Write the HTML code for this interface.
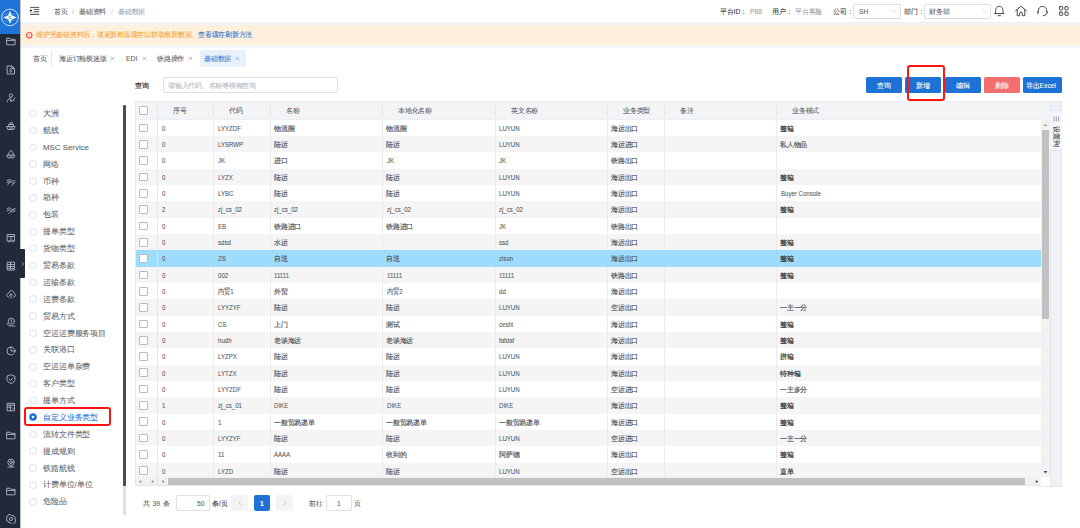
<!DOCTYPE html>
<html><head><meta charset="utf-8"><style>
*{box-sizing:border-box;margin:0;padding:0}
html,body{width:1080px;height:528px;overflow:hidden;background:#fff;font-family:"Liberation Sans",sans-serif;color:#606266;position:relative}
.t{position:absolute;white-space:nowrap;transform-origin:0 0;transform:scale(.5625);line-height:20px;-webkit-text-stroke:0.12px currentColor}
.r{position:absolute}
.b{font-weight:bold}
.si{position:absolute}
.bb{-webkit-text-stroke:0.32px currentColor}
.ns{-webkit-text-stroke:0.1px currentColor}
.tb{-webkit-text-stroke:0.3px currentColor}
.tl{-webkit-text-stroke:0.15px currentColor}
</style></head><body>
<div class="r" style="left:0.00px;top:0.00px;width:20.00px;height:528.00px;background:#222a3a"></div>
<div class="r" style="left:0.00px;top:0.00px;width:20.00px;height:34.00px;background:#1f74d8"></div>
<div class="r" style="left:20.00px;top:0.00px;width:1.20px;height:528.00px;background:rgba(34,42,58,0.28);z-index:5"></div>
<svg class="si" style="left:5.5px;top:36.40px" width="10" height="10" viewBox="0 0 10 10" fill="none" stroke="#a2a9bb" stroke-width="1" stroke-linejoin="round" stroke-linecap="round"><path d="M1 2.2h3l1 1.1h4v5.5H1z M1 4.4h8" /></svg>
<svg class="si" style="left:5.5px;top:64.50px" width="10" height="10" viewBox="0 0 10 10" fill="none" stroke="#a2a9bb" stroke-width="1" stroke-linejoin="round" stroke-linecap="round"><path d="M1.5 1h4.5l2.5 2.5v5.5h-7z M6 1v2.5h2.5" /><path d="M5.6 4.3c-.6-.5-1.8-.3-1.8.5s1.9.5 1.9 1.4-1.3 1-2 .4 M4.8 3.5v4" stroke-width="0.7"/></svg>
<svg class="si" style="left:5.5px;top:92.60px" width="10" height="10" viewBox="0 0 10 10" fill="none" stroke="#a2a9bb" stroke-width="1" stroke-linejoin="round" stroke-linecap="round"><circle cx="5" cy="2.6" r="1.7"/><path d="M1.2 8.8C1.6 6.4 3 5 5 5 M4.2 6.2L5 8.6 6 7 6.8 8.2 8.8 5" /></svg>
<svg class="si" style="left:5.5px;top:120.70px" width="10" height="10" viewBox="0 0 10 10" fill="none" stroke="#a2a9bb" stroke-width="1" stroke-linejoin="round" stroke-linecap="round"><path d="M1 5.5h8l-1.2 3H2.2z M2.5 5.5V3.5h5v2 M4 3.5V1.8h2.5v1.7" /><path d="M3.5 7h3" /></svg>
<svg class="si" style="left:5.5px;top:148.80px" width="10" height="10" viewBox="0 0 10 10" fill="none" stroke="#a2a9bb" stroke-width="1" stroke-linejoin="round" stroke-linecap="round"><path d="M1.2 6h7.6l-1 2.8H2.2z M2.5 6c0-2 1-3.5 2.5-4.5 1.5 1 2.5 2.5 2.5 4.5" /><path d="M4 7.2h2" /></svg>
<svg class="si" style="left:5.5px;top:176.90px" width="10" height="10" viewBox="0 0 10 10" fill="none" stroke="#a2a9bb" stroke-width="1" stroke-linejoin="round" stroke-linecap="round"><path d="M1 3.5c1.5-1 3-1 4.5 0s3 1 3.5 0 M1 5.5c1.5-1 3-1 4.5 0s3 1 3.5 0 M2 7.5l2-3 M6 8.5l2-2.5" /></svg>
<svg class="si" style="left:5.5px;top:205.00px" width="10" height="10" viewBox="0 0 10 10" fill="none" stroke="#a2a9bb" stroke-width="1" stroke-linejoin="round" stroke-linecap="round"><path d="M1 4c1.5-1.5 3-1.5 4.5 0s3 1 3.5-.5 M1 6c1.5-1.5 3-1.5 4.5 0s3 1 3.5-.5 M3 8.5l5-5" /></svg>
<svg class="si" style="left:5.5px;top:233.10px" width="10" height="10" viewBox="0 0 10 10" fill="none" stroke="#a2a9bb" stroke-width="1" stroke-linejoin="round" stroke-linecap="round"><path d="M1.5 1.5h7v6.5h-7z M1.5 3.5h7 M3 8v1.2 M7 8v1.2 M5 3.5v4.5" /></svg>
<svg class="si" style="left:5.5px;top:261.20px" width="10" height="10" viewBox="0 0 10 10" fill="none" stroke="#a2a9bb" stroke-width="1" stroke-linejoin="round" stroke-linecap="round"><path d="M1.5 1.2h7v7.8h-7z M1.5 3.5h7 M1.5 5.5h7 M1.5 7.3h7 M4.5 1.2v7.8" /></svg>
<svg class="si" style="left:5.5px;top:289.30px" width="10" height="10" viewBox="0 0 10 10" fill="none" stroke="#a2a9bb" stroke-width="1" stroke-linejoin="round" stroke-linecap="round"><path d="M2.8 8C1.5 8 .8 7.1.8 6.1s.8-1.9 1.9-1.9C3 2.6 4.1 1.6 5.4 1.6c1.6 0 2.8 1.3 2.8 2.9C9 4.7 9.4 5.4 9.4 6.2 9.4 7.2 8.6 8 7.6 8 M5 9V4.8 M3.6 6.2L5 4.8l1.4 1.4" /></svg>
<svg class="si" style="left:5.5px;top:317.40px" width="10" height="10" viewBox="0 0 10 10" fill="none" stroke="#a2a9bb" stroke-width="1" stroke-linejoin="round" stroke-linecap="round"><circle cx="5.3" cy="4.2" r="3.1"/><path d="M5.3 2.7v2.4 M1.5 6.5c0 1.5 1 2.5 2.5 2.5h5" /></svg>
<svg class="si" style="left:5.5px;top:345.50px" width="10" height="10" viewBox="0 0 10 10" fill="none" stroke="#a2a9bb" stroke-width="1" stroke-linejoin="round" stroke-linecap="round"><circle cx="5" cy="5" r="4"/><path d="M5 1v4h4" /></svg>
<svg class="si" style="left:5.5px;top:373.60px" width="10" height="10" viewBox="0 0 10 10" fill="none" stroke="#a2a9bb" stroke-width="1" stroke-linejoin="round" stroke-linecap="round"><path d="M5 .9l4 1.5v3c0 2-1.8 3.3-4 4-2.2-.7-4-2-4-4v-3z M3.2 5.1l1.4 1.3 2.4-2.4" /></svg>
<svg class="si" style="left:5.5px;top:401.70px" width="10" height="10" viewBox="0 0 10 10" fill="none" stroke="#a2a9bb" stroke-width="1" stroke-linejoin="round" stroke-linecap="round"><path d="M1.5 1.3h7v7.5h-7z M1.5 3.2h7 M1.5 5.2h3 M6 5.5l1.5 1.5 M4.5 3.2v5.6" /></svg>
<svg class="si" style="left:5.5px;top:429.80px" width="10" height="10" viewBox="0 0 10 10" fill="none" stroke="#a2a9bb" stroke-width="1" stroke-linejoin="round" stroke-linecap="round"><path d="M1 2.2h3l1 1.1h4v5.5H1z M1 4.4h8" /></svg>
<svg class="si" style="left:5.5px;top:457.90px" width="10" height="10" viewBox="0 0 10 10" fill="none" stroke="#a2a9bb" stroke-width="1" stroke-linejoin="round" stroke-linecap="round"><circle cx="5" cy="4.3" r="3.2"/><circle cx="5" cy="4.3" r="1.3"/><path d="M2 9h6 M5 7.5V9" /></svg>
<svg class="si" style="left:5.5px;top:486.00px" width="10" height="10" viewBox="0 0 10 10" fill="none" stroke="#a2a9bb" stroke-width="1" stroke-linejoin="round" stroke-linecap="round"><path d="M1 2.2h3l1 1.1h4v5.5H1z M1 4.4h8" /></svg>
<svg class="si" style="left:5.5px;top:514.10px" width="10" height="10" viewBox="0 0 10 10" fill="none" stroke="#a2a9bb" stroke-width="1" stroke-linejoin="round" stroke-linecap="round"><path d="M5 .8l1.1.9 1.4-.2.5 1.3 1.3.6-.2 1.4.8 1.2-.8 1.2.2 1.4-1.3.6-.5 1.3-1.4-.2L5 9.2l-1.1-.9-1.4.2-.5-1.3-1.3-.6.2-1.4L.1 5l.8-1.2-.2-1.4 1.3-.6.5-1.3 1.4.2z"/><circle cx="5" cy="5" r="1.6"/></svg>
<div class="r" style="left:20.00px;top:0.00px;width:1060.00px;height:22.50px;background:#fff;border-bottom:1px solid #eceef3"></div>
<div class="r" style="left:20.00px;top:22.50px;width:1060.00px;height:25.00px;background:#f3f4f7"></div>
<div class="r" style="left:20.00px;top:25.20px;width:1060.00px;height:19.80px;background:#fef0dc"></div>
<div class="t " style="left:53.50px;top:5.88px;font-size:12px;color:#606266;">首页</div>
<div class="t " style="left:72.00px;top:5.88px;font-size:12px;color:#c0c4cc;">/</div>
<div class="t " style="left:79.00px;top:5.88px;font-size:12px;color:#606266;">基础资料</div>
<div class="t " style="left:111.00px;top:5.88px;font-size:12px;color:#c0c4cc;">/</div>
<div class="t " style="left:118.00px;top:5.88px;font-size:12px;color:#97a8be;">基础数据</div>
<div class="t " style="left:720.40px;top:5.88px;font-size:12px;color:#303133;">平台ID：</div>
<div class="t " style="left:749.60px;top:5.88px;font-size:12px;color:#97a0aa;">P88</div>
<div class="t " style="left:772.00px;top:5.88px;font-size:12px;color:#303133;">用户：</div>
<div class="t " style="left:795.00px;top:5.88px;font-size:12px;color:#97a0aa;">平台客服</div>
<div class="t " style="left:833.00px;top:5.88px;font-size:12px;color:#303133;">公司：</div>
<div class="r" style="left:853.00px;top:3.50px;width:47.50px;height:15.00px;border:1px solid #dcdfe6;border-radius:2px;background:#fff"></div>
<div class="t " style="left:858.50px;top:5.88px;font-size:12px;color:#606266;">SH</div>
<div class="t " style="left:903.70px;top:5.88px;font-size:12px;color:#303133;">部门：</div>
<div class="r" style="left:924.40px;top:3.50px;width:67.00px;height:15.00px;border:1px solid #dcdfe6;border-radius:2px;background:#fff"></div>
<div class="t " style="left:929.00px;top:5.88px;font-size:12px;color:#606266;">财务部</div>
<div class="t " style="left:35.50px;top:29.48px;font-size:12px;color:#f5a33b;">维护完基础资料后，请更新相应缓存以获取最新数据。</div>
<div class="t " style="left:197.50px;top:29.48px;font-size:12px;color:#2f6fd0;">查看缓存刷新方法</div>
<div class="t " style="left:33.20px;top:52.68px;font-size:12px;color:#606266;">首页</div>
<div class="r" style="left:51.30px;top:50.30px;width:0.70px;height:16.70px;background:#e4e7ed"></div>
<div class="t " style="left:59.00px;top:52.68px;font-size:12px;color:#606266;">海运订舱极速版</div>
<svg class="si" style="left:110.10px;top:56.10px" width="5" height="5" viewBox="0 0 5 5"><path d="M0.8 0.8L4.2 4.2M4.2 0.8L0.8 4.2" stroke="#8f9297" stroke-width="0.65"/></svg><div class="t " style="left:126.00px;top:52.68px;font-size:12px;color:#606266;">EDI</div>
<svg class="si" style="left:141.60px;top:56.10px" width="5" height="5" viewBox="0 0 5 5"><path d="M0.8 0.8L4.2 4.2M4.2 0.8L0.8 4.2" stroke="#8f9297" stroke-width="0.65"/></svg><div class="t " style="left:156.80px;top:52.68px;font-size:12px;color:#606266;">铁路操作</div>
<svg class="si" style="left:187.80px;top:56.10px" width="5" height="5" viewBox="0 0 5 5"><path d="M0.8 0.8L4.2 4.2M4.2 0.8L0.8 4.2" stroke="#8f9297" stroke-width="0.65"/></svg><div class="r" style="left:199.80px;top:50.30px;width:46.60px;height:17.00px;background:#e8f0fb"></div>
<div class="t " style="left:204.00px;top:52.68px;font-size:12px;color:#3f7fd6;">基础数据</div>
<svg class="si" style="left:234.70px;top:56.10px" width="5" height="5" viewBox="0 0 5 5"><path d="M0.8 0.8L4.2 4.2M4.2 0.8L0.8 4.2" stroke="#7a9fd6" stroke-width="0.65"/></svg><div class="t bb" style="left:135.10px;top:79.88px;font-size:12px;color:#303133;">查询</div>
<div class="r" style="left:163.20px;top:77.10px;width:174.50px;height:15.70px;border:1px solid #dcdfe6;border-radius:2px"></div>
<div class="t " style="left:167.70px;top:79.67px;font-size:12px;color:#b4b7bd;">请输入代码、名称等模糊查询</div>
<div class="r" style="left:865.80px;top:77.10px;width:36.00px;height:15.70px;background:#1f72d5;border-radius:1.5px"></div>
<div class="t " style="left:877.05px;top:80.07px;font-size:12px;color:#fff;">查询</div>
<div class="r" style="left:905.00px;top:77.10px;width:36.30px;height:15.70px;background:#1f72d5;border-radius:1.5px"></div>
<div class="t " style="left:916.40px;top:80.07px;font-size:12px;color:#fff;">新增</div>
<div class="r" style="left:944.60px;top:77.10px;width:36.00px;height:15.70px;background:#1f72d5;border-radius:1.5px"></div>
<div class="t " style="left:955.85px;top:80.07px;font-size:12px;color:#fff;">编辑</div>
<div class="r" style="left:984.10px;top:77.10px;width:36.00px;height:15.70px;background:#f36e6e;border-radius:1.5px"></div>
<div class="t " style="left:995.35px;top:80.07px;font-size:12px;color:#fff;">删除</div>
<div class="r" style="left:1023.40px;top:77.10px;width:38.60px;height:15.70px;background:#1f72d5;border-radius:1.5px"></div>
<div class="t " style="left:1026.20px;top:80.07px;font-size:12px;color:#fff;">导出Excel</div>
<div class="r" style="left:906.80px;top:64.70px;width:37.80px;height:36.00px;border:2.1px solid #ff1414;border-radius:3px"></div>
<div class="r" style="left:29.40px;top:109.80px;width:7.60px;height:7.60px;border:0.8px solid #dcdfe6;border-radius:50%;background:#fff"></div>
<div class="t ns" style="left:42.70px;top:108.07px;font-size:14px;color:#606266;">大洲</div>
<div class="r" style="left:29.40px;top:126.68px;width:7.60px;height:7.60px;border:0.8px solid #dcdfe6;border-radius:50%;background:#fff"></div>
<div class="t ns" style="left:42.70px;top:124.95px;font-size:14px;color:#606266;">航线</div>
<div class="r" style="left:29.40px;top:143.56px;width:7.60px;height:7.60px;border:0.8px solid #dcdfe6;border-radius:50%;background:#fff"></div>
<div class="t ns" style="left:42.70px;top:141.83px;font-size:14px;color:#606266;">MSC Service</div>
<div class="r" style="left:29.40px;top:160.44px;width:7.60px;height:7.60px;border:0.8px solid #dcdfe6;border-radius:50%;background:#fff"></div>
<div class="t ns" style="left:42.70px;top:158.72px;font-size:14px;color:#606266;">网络</div>
<div class="r" style="left:29.40px;top:177.32px;width:7.60px;height:7.60px;border:0.8px solid #dcdfe6;border-radius:50%;background:#fff"></div>
<div class="t ns" style="left:42.70px;top:175.59px;font-size:14px;color:#606266;">币种</div>
<div class="r" style="left:29.40px;top:194.20px;width:7.60px;height:7.60px;border:0.8px solid #dcdfe6;border-radius:50%;background:#fff"></div>
<div class="t ns" style="left:42.70px;top:192.47px;font-size:14px;color:#606266;">箱种</div>
<div class="r" style="left:29.40px;top:211.08px;width:7.60px;height:7.60px;border:0.8px solid #dcdfe6;border-radius:50%;background:#fff"></div>
<div class="t ns" style="left:42.70px;top:209.35px;font-size:14px;color:#606266;">包装</div>
<div class="r" style="left:29.40px;top:227.96px;width:7.60px;height:7.60px;border:0.8px solid #dcdfe6;border-radius:50%;background:#fff"></div>
<div class="t ns" style="left:42.70px;top:226.23px;font-size:14px;color:#606266;">提单类型</div>
<div class="r" style="left:29.40px;top:244.84px;width:7.60px;height:7.60px;border:0.8px solid #dcdfe6;border-radius:50%;background:#fff"></div>
<div class="t ns" style="left:42.70px;top:243.11px;font-size:14px;color:#606266;">货物类型</div>
<div class="r" style="left:29.40px;top:261.72px;width:7.60px;height:7.60px;border:0.8px solid #dcdfe6;border-radius:50%;background:#fff"></div>
<div class="t ns" style="left:42.70px;top:260.00px;font-size:14px;color:#606266;">贸易条款</div>
<div class="r" style="left:29.40px;top:278.60px;width:7.60px;height:7.60px;border:0.8px solid #dcdfe6;border-radius:50%;background:#fff"></div>
<div class="t ns" style="left:42.70px;top:276.88px;font-size:14px;color:#606266;">运输条款</div>
<div class="r" style="left:29.40px;top:295.48px;width:7.60px;height:7.60px;border:0.8px solid #dcdfe6;border-radius:50%;background:#fff"></div>
<div class="t ns" style="left:42.70px;top:293.75px;font-size:14px;color:#606266;">运费条款</div>
<div class="r" style="left:29.40px;top:312.36px;width:7.60px;height:7.60px;border:0.8px solid #dcdfe6;border-radius:50%;background:#fff"></div>
<div class="t ns" style="left:42.70px;top:310.63px;font-size:14px;color:#606266;">贸易方式</div>
<div class="r" style="left:29.40px;top:329.24px;width:7.60px;height:7.60px;border:0.8px solid #dcdfe6;border-radius:50%;background:#fff"></div>
<div class="t ns" style="left:42.70px;top:327.51px;font-size:14px;color:#606266;">空运运费服务项目</div>
<div class="r" style="left:29.40px;top:346.12px;width:7.60px;height:7.60px;border:0.8px solid #dcdfe6;border-radius:50%;background:#fff"></div>
<div class="t ns" style="left:42.70px;top:344.39px;font-size:14px;color:#606266;">关联港口</div>
<div class="r" style="left:29.40px;top:363.00px;width:7.60px;height:7.60px;border:0.8px solid #dcdfe6;border-radius:50%;background:#fff"></div>
<div class="t ns" style="left:42.70px;top:361.27px;font-size:14px;color:#606266;">空运运单杂费</div>
<div class="r" style="left:29.40px;top:379.88px;width:7.60px;height:7.60px;border:0.8px solid #dcdfe6;border-radius:50%;background:#fff"></div>
<div class="t ns" style="left:42.70px;top:378.15px;font-size:14px;color:#606266;">客户类型</div>
<div class="r" style="left:29.40px;top:396.76px;width:7.60px;height:7.60px;border:0.8px solid #dcdfe6;border-radius:50%;background:#fff"></div>
<div class="t ns" style="left:42.70px;top:395.03px;font-size:14px;color:#606266;">提单方式</div>
<svg class="si" style="left:29.2px;top:413.44px" width="8" height="8" viewBox="0 0 8 8"><circle cx="4" cy="4" r="3.8" fill="#1e6fd9"/><circle cx="4" cy="4" r="1.25" fill="#fff"/></svg><div class="t ns" style="left:42.70px;top:411.91px;font-size:14px;color:#1e6fd9;">自定义业务类型</div>
<div class="r" style="left:29.40px;top:430.52px;width:7.60px;height:7.60px;border:0.8px solid #dcdfe6;border-radius:50%;background:#fff"></div>
<div class="t ns" style="left:42.70px;top:428.79px;font-size:14px;color:#606266;">流转文件类型</div>
<div class="r" style="left:29.40px;top:447.40px;width:7.60px;height:7.60px;border:0.8px solid #dcdfe6;border-radius:50%;background:#fff"></div>
<div class="t ns" style="left:42.70px;top:445.67px;font-size:14px;color:#606266;">提成规则</div>
<div class="r" style="left:29.40px;top:464.28px;width:7.60px;height:7.60px;border:0.8px solid #dcdfe6;border-radius:50%;background:#fff"></div>
<div class="t ns" style="left:42.70px;top:462.55px;font-size:14px;color:#606266;">铁路航线</div>
<div class="r" style="left:29.40px;top:481.16px;width:7.60px;height:7.60px;border:0.8px solid #dcdfe6;border-radius:50%;background:#fff"></div>
<div class="t ns" style="left:42.70px;top:479.43px;font-size:14px;color:#606266;">计费单位/单位</div>
<div class="r" style="left:29.40px;top:498.04px;width:7.60px;height:7.60px;border:0.8px solid #dcdfe6;border-radius:50%;background:#fff"></div>
<div class="t ns" style="left:42.70px;top:496.31px;font-size:14px;color:#606266;">危险品</div>
<div class="r" style="left:24.00px;top:407.10px;width:86.80px;height:19.40px;border:2.1px solid #ff1414;border-radius:3px"></div>
<div class="r" style="left:122.80px;top:105.30px;width:3.00px;height:381.00px;background:#4a4d52;border-radius:1.5px"></div>
<div class="r" style="left:122.80px;top:486.00px;width:3.00px;height:29.00px;background:#dfe1e8"></div>
<div class="r" style="left:135.50px;top:100.80px;width:915.00px;height:19.00px;background:#f2f4f5;border-top:1px solid #ebeef5;border-bottom:1px solid #ebeef5"></div>
<div class="r" style="left:135.50px;top:119.80px;width:905.50px;height:16.32px;background:#fff"></div>
<div class="r" style="left:135.50px;top:136.12px;width:905.50px;height:16.32px;background:#f5f5f5"></div>
<div class="r" style="left:135.50px;top:152.44px;width:905.50px;height:16.32px;background:#fff"></div>
<div class="r" style="left:135.50px;top:168.76px;width:905.50px;height:16.32px;background:#f5f5f5"></div>
<div class="r" style="left:135.50px;top:185.08px;width:905.50px;height:16.32px;background:#fff"></div>
<div class="r" style="left:135.50px;top:201.40px;width:905.50px;height:16.32px;background:#f5f5f5"></div>
<div class="r" style="left:135.50px;top:217.72px;width:905.50px;height:16.32px;background:#fff"></div>
<div class="r" style="left:135.50px;top:234.04px;width:905.50px;height:16.32px;background:#f5f5f5"></div>
<div class="r" style="left:135.50px;top:250.36px;width:905.50px;height:16.32px;background:#9ddcfc"></div>
<div class="r" style="left:135.50px;top:266.68px;width:905.50px;height:16.32px;background:#f5f5f5"></div>
<div class="r" style="left:135.50px;top:283.00px;width:905.50px;height:16.32px;background:#fff"></div>
<div class="r" style="left:135.50px;top:299.32px;width:905.50px;height:16.32px;background:#f5f5f5"></div>
<div class="r" style="left:135.50px;top:315.64px;width:905.50px;height:16.32px;background:#fff"></div>
<div class="r" style="left:135.50px;top:331.96px;width:905.50px;height:16.32px;background:#f5f5f5"></div>
<div class="r" style="left:135.50px;top:348.28px;width:905.50px;height:16.32px;background:#fff"></div>
<div class="r" style="left:135.50px;top:364.60px;width:905.50px;height:16.32px;background:#f5f5f5"></div>
<div class="r" style="left:135.50px;top:380.92px;width:905.50px;height:16.32px;background:#fff"></div>
<div class="r" style="left:135.50px;top:397.24px;width:905.50px;height:16.32px;background:#f5f5f5"></div>
<div class="r" style="left:135.50px;top:413.56px;width:905.50px;height:16.32px;background:#fff"></div>
<div class="r" style="left:135.50px;top:429.88px;width:905.50px;height:16.32px;background:#f5f5f5"></div>
<div class="r" style="left:135.50px;top:446.20px;width:905.50px;height:16.32px;background:#fff"></div>
<div class="r" style="left:135.50px;top:462.52px;width:905.50px;height:16.32px;background:#f5f5f5"></div>
<div class="r" style="left:213.10px;top:119.80px;width:0.80px;height:359.04px;background:#e9ebef"></div>
<div class="r" style="left:269.60px;top:119.80px;width:0.80px;height:359.04px;background:#e9ebef"></div>
<div class="r" style="left:382.10px;top:119.80px;width:0.80px;height:359.04px;background:#e9ebef"></div>
<div class="r" style="left:494.60px;top:119.80px;width:0.80px;height:359.04px;background:#e9ebef"></div>
<div class="r" style="left:607.00px;top:119.80px;width:0.80px;height:359.04px;background:#e9ebef"></div>
<div class="r" style="left:664.10px;top:119.80px;width:0.80px;height:359.04px;background:#e9ebef"></div>
<div class="r" style="left:776.30px;top:119.80px;width:0.80px;height:359.04px;background:#e9ebef"></div>
<div class="r" style="left:135.50px;top:250.36px;width:905.50px;height:16.32px;background:#9ddcfc"></div>
<div class="r" style="left:213.10px;top:104.80px;width:0.80px;height:11.00px;background:#e2e5ea"></div>
<div class="r" style="left:269.60px;top:104.80px;width:0.80px;height:11.00px;background:#e2e5ea"></div>
<div class="r" style="left:382.10px;top:104.80px;width:0.80px;height:11.00px;background:#e2e5ea"></div>
<div class="r" style="left:494.60px;top:104.80px;width:0.80px;height:11.00px;background:#e2e5ea"></div>
<div class="r" style="left:607.00px;top:104.80px;width:0.80px;height:11.00px;background:#e2e5ea"></div>
<div class="r" style="left:664.10px;top:104.80px;width:0.80px;height:11.00px;background:#e2e5ea"></div>
<div class="r" style="left:776.30px;top:104.80px;width:0.80px;height:11.00px;background:#e2e5ea"></div>
<div class="r" style="left:139.20px;top:106.00px;width:8.70px;height:8.70px;border:0.8px solid #b6bcc6;border-radius:1px;background:#fff"></div>
<div class="t " style="left:172.50px;top:104.77px;font-size:12px;color:#606266;">序号</div>
<div class="t " style="left:229.00px;top:104.77px;font-size:12px;color:#606266;">代码</div>
<div class="t " style="left:285.50px;top:104.77px;font-size:12px;color:#606266;">名称</div>
<div class="t " style="left:398.00px;top:104.77px;font-size:12px;color:#606266;">本地化名称</div>
<div class="t " style="left:510.50px;top:104.77px;font-size:12px;color:#606266;">英文名称</div>
<div class="t " style="left:622.90px;top:104.77px;font-size:12px;color:#606266;">业务类型</div>
<div class="t " style="left:680.00px;top:104.77px;font-size:12px;color:#606266;">备注</div>
<div class="t " style="left:792.20px;top:104.77px;font-size:12px;color:#606266;">业务模式</div>
<div class="r" style="left:139.20px;top:123.66px;width:8.70px;height:8.70px;border:0.8px solid #b6bcc6;border-radius:1px;background:#fff"></div>
<div class="t tl" style="left:161.50px;top:122.83px;font-size:12px;color:#55575c;transform:scale(.434,.5625);font-size:14px;">0</div>
<div class="t tl" style="left:217.70px;top:122.83px;font-size:12px;color:#55575c;transform:scale(.434,.5625);font-size:14px;">LYYZDF</div>
<div class="t tb" style="left:273.50px;top:122.83px;font-size:12px;color:#55575c;">物流圈</div>
<div class="t tb" style="left:386.00px;top:122.83px;font-size:12px;color:#55575c;">物流圈</div>
<div class="t tl" style="left:499.20px;top:122.83px;font-size:12px;color:#55575c;transform:scale(.434,.5625);font-size:14px;">LUYUN</div>
<div class="t tb" style="left:610.90px;top:122.83px;font-size:12px;color:#55575c;">海运出口</div>
<div class="t bb" style="left:780.20px;top:122.83px;font-size:12px;color:#303133;">整箱</div>
<div class="r" style="left:139.20px;top:139.98px;width:8.70px;height:8.70px;border:0.8px solid #b6bcc6;border-radius:1px;background:#fff"></div>
<div class="t tl" style="left:161.50px;top:139.16px;font-size:12px;color:#55575c;transform:scale(.434,.5625);font-size:14px;">0</div>
<div class="t tl" style="left:217.70px;top:139.16px;font-size:12px;color:#55575c;transform:scale(.434,.5625);font-size:14px;">LYSRWP</div>
<div class="t tb" style="left:273.50px;top:139.16px;font-size:12px;color:#55575c;">陆运</div>
<div class="t tb" style="left:386.00px;top:139.16px;font-size:12px;color:#55575c;">陆运</div>
<div class="t tl" style="left:499.20px;top:139.16px;font-size:12px;color:#55575c;transform:scale(.434,.5625);font-size:14px;">LUYUN</div>
<div class="t tb" style="left:610.90px;top:139.16px;font-size:12px;color:#55575c;">海运进口</div>
<div class="t tb" style="left:780.20px;top:139.16px;font-size:12px;color:#55575c;">私人物品</div>
<div class="r" style="left:139.20px;top:156.30px;width:8.70px;height:8.70px;border:0.8px solid #b6bcc6;border-radius:1px;background:#fff"></div>
<div class="t tl" style="left:161.50px;top:155.47px;font-size:12px;color:#55575c;transform:scale(.434,.5625);font-size:14px;">0</div>
<div class="t tl" style="left:217.70px;top:155.47px;font-size:12px;color:#55575c;transform:scale(.434,.5625);font-size:14px;">JK</div>
<div class="t tb" style="left:273.50px;top:155.47px;font-size:12px;color:#55575c;">进口</div>
<div class="t tl" style="left:386.70px;top:155.47px;font-size:12px;color:#55575c;transform:scale(.434,.5625);font-size:14px;">JK</div>
<div class="t tl" style="left:499.20px;top:155.47px;font-size:12px;color:#55575c;transform:scale(.434,.5625);font-size:14px;">JK</div>
<div class="t tb" style="left:610.90px;top:155.47px;font-size:12px;color:#55575c;">铁路出口</div>
<div class="r" style="left:139.20px;top:172.62px;width:8.70px;height:8.70px;border:0.8px solid #b6bcc6;border-radius:1px;background:#fff"></div>
<div class="t tl" style="left:161.50px;top:171.79px;font-size:12px;color:#55575c;transform:scale(.434,.5625);font-size:14px;">0</div>
<div class="t tl" style="left:217.70px;top:171.79px;font-size:12px;color:#55575c;transform:scale(.434,.5625);font-size:14px;">LYZX</div>
<div class="t tb" style="left:273.50px;top:171.79px;font-size:12px;color:#55575c;">陆运</div>
<div class="t tb" style="left:386.00px;top:171.79px;font-size:12px;color:#55575c;">陆运</div>
<div class="t tl" style="left:499.20px;top:171.79px;font-size:12px;color:#55575c;transform:scale(.434,.5625);font-size:14px;">LUYUN</div>
<div class="t tb" style="left:610.90px;top:171.79px;font-size:12px;color:#55575c;">海运出口</div>
<div class="t bb" style="left:780.20px;top:171.79px;font-size:12px;color:#303133;">整箱</div>
<div class="r" style="left:139.20px;top:188.94px;width:8.70px;height:8.70px;border:0.8px solid #b6bcc6;border-radius:1px;background:#fff"></div>
<div class="t tl" style="left:161.50px;top:188.11px;font-size:12px;color:#55575c;transform:scale(.434,.5625);font-size:14px;">0</div>
<div class="t tl" style="left:217.70px;top:188.11px;font-size:12px;color:#55575c;transform:scale(.434,.5625);font-size:14px;">LYBC</div>
<div class="t tb" style="left:273.50px;top:188.11px;font-size:12px;color:#55575c;">陆运</div>
<div class="t tb" style="left:386.00px;top:188.11px;font-size:12px;color:#55575c;">陆运</div>
<div class="t tl" style="left:499.20px;top:188.11px;font-size:12px;color:#55575c;transform:scale(.434,.5625);font-size:14px;">LUYUN</div>
<div class="t tb" style="left:610.90px;top:188.11px;font-size:12px;color:#55575c;">海运出口</div>
<div class="t tl" style="left:780.90px;top:188.11px;font-size:12px;color:#55575c;transform:scale(.434,.5625);font-size:14px;">Buyer Console</div>
<div class="r" style="left:139.20px;top:205.26px;width:8.70px;height:8.70px;border:0.8px solid #b6bcc6;border-radius:1px;background:#fff"></div>
<div class="t tl" style="left:161.50px;top:204.43px;font-size:12px;color:#55575c;transform:scale(.434,.5625);font-size:14px;">2</div>
<div class="t tl" style="left:217.70px;top:204.43px;font-size:12px;color:#55575c;transform:scale(.434,.5625);font-size:14px;">zj_cs_02</div>
<div class="t tl" style="left:274.20px;top:204.43px;font-size:12px;color:#55575c;transform:scale(.434,.5625);font-size:14px;">zj_cs_02</div>
<div class="t tl" style="left:386.70px;top:204.43px;font-size:12px;color:#55575c;transform:scale(.434,.5625);font-size:14px;">zj_cs_02</div>
<div class="t tl" style="left:499.20px;top:204.43px;font-size:12px;color:#55575c;transform:scale(.434,.5625);font-size:14px;">zj_cs_02</div>
<div class="t tb" style="left:610.90px;top:204.43px;font-size:12px;color:#55575c;">海运出口</div>
<div class="t bb" style="left:780.20px;top:204.43px;font-size:12px;color:#303133;">整箱</div>
<div class="r" style="left:139.20px;top:221.58px;width:8.70px;height:8.70px;border:0.8px solid #b6bcc6;border-radius:1px;background:#fff"></div>
<div class="t tl" style="left:161.50px;top:220.75px;font-size:12px;color:#55575c;transform:scale(.434,.5625);font-size:14px;">0</div>
<div class="t tl" style="left:217.70px;top:220.75px;font-size:12px;color:#55575c;transform:scale(.434,.5625);font-size:14px;">EB</div>
<div class="t tb" style="left:273.50px;top:220.75px;font-size:12px;color:#55575c;">铁路进口</div>
<div class="t tb" style="left:386.00px;top:220.75px;font-size:12px;color:#55575c;">铁路进口</div>
<div class="t tl" style="left:499.20px;top:220.75px;font-size:12px;color:#55575c;transform:scale(.434,.5625);font-size:14px;">JK</div>
<div class="t tb" style="left:610.90px;top:220.75px;font-size:12px;color:#55575c;">铁路出口</div>
<div class="r" style="left:139.20px;top:237.90px;width:8.70px;height:8.70px;border:0.8px solid #b6bcc6;border-radius:1px;background:#fff"></div>
<div class="t tl" style="left:161.50px;top:237.08px;font-size:12px;color:#55575c;transform:scale(.434,.5625);font-size:14px;">0</div>
<div class="t tl" style="left:217.70px;top:237.08px;font-size:12px;color:#55575c;transform:scale(.434,.5625);font-size:14px;">sdsd</div>
<div class="t tb" style="left:273.50px;top:237.08px;font-size:12px;color:#55575c;">水运</div>
<div class="t tl" style="left:499.20px;top:237.08px;font-size:12px;color:#55575c;transform:scale(.434,.5625);font-size:14px;">ssd</div>
<div class="t tb" style="left:610.90px;top:237.08px;font-size:12px;color:#55575c;">海运出口</div>
<div class="t bb" style="left:780.20px;top:237.08px;font-size:12px;color:#303133;">整箱</div>
<div class="r" style="left:139.20px;top:254.22px;width:8.70px;height:8.70px;border:0.8px solid #b6bcc6;border-radius:1px;background:#fff"></div>
<div class="t tl" style="left:161.50px;top:253.40px;font-size:12px;color:#55575c;transform:scale(.434,.5625);font-size:14px;">0</div>
<div class="t tl" style="left:217.70px;top:253.40px;font-size:12px;color:#55575c;transform:scale(.434,.5625);font-size:14px;">ZS</div>
<div class="t tb" style="left:273.50px;top:253.40px;font-size:12px;color:#55575c;">自送</div>
<div class="t tb" style="left:386.00px;top:253.40px;font-size:12px;color:#55575c;">自送</div>
<div class="t tl" style="left:499.20px;top:253.40px;font-size:12px;color:#55575c;transform:scale(.434,.5625);font-size:14px;">zison</div>
<div class="t tb" style="left:610.90px;top:253.40px;font-size:12px;color:#55575c;">海运出口</div>
<div class="t bb" style="left:780.20px;top:253.40px;font-size:12px;color:#303133;">整箱</div>
<div class="r" style="left:139.20px;top:270.54px;width:8.70px;height:8.70px;border:0.8px solid #b6bcc6;border-radius:1px;background:#fff"></div>
<div class="t tl" style="left:161.50px;top:269.72px;font-size:12px;color:#55575c;transform:scale(.434,.5625);font-size:14px;">0</div>
<div class="t tl" style="left:217.70px;top:269.72px;font-size:12px;color:#55575c;transform:scale(.434,.5625);font-size:14px;">002</div>
<div class="t tl" style="left:274.20px;top:269.72px;font-size:12px;color:#55575c;transform:scale(.434,.5625);font-size:14px;">11111</div>
<div class="t tl" style="left:386.70px;top:269.72px;font-size:12px;color:#55575c;transform:scale(.434,.5625);font-size:14px;">11111</div>
<div class="t tl" style="left:499.20px;top:269.72px;font-size:12px;color:#55575c;transform:scale(.434,.5625);font-size:14px;">11111</div>
<div class="t tb" style="left:610.90px;top:269.72px;font-size:12px;color:#55575c;">铁路出口</div>
<div class="t bb" style="left:780.20px;top:269.72px;font-size:12px;color:#303133;">整箱</div>
<div class="r" style="left:139.20px;top:286.86px;width:8.70px;height:8.70px;border:0.8px solid #b6bcc6;border-radius:1px;background:#fff"></div>
<div class="t tl" style="left:161.50px;top:286.04px;font-size:12px;color:#55575c;transform:scale(.434,.5625);font-size:14px;">0</div>
<div class="t tl" style="left:217.70px;top:286.04px;font-size:12px;color:#55575c;transform:scale(.434,.5625);font-size:14px;">内贸1</div>
<div class="t tb" style="left:273.50px;top:286.04px;font-size:12px;color:#55575c;">外贸</div>
<div class="t tl" style="left:386.70px;top:286.04px;font-size:12px;color:#55575c;transform:scale(.434,.5625);font-size:14px;">内贸2</div>
<div class="t tl" style="left:499.20px;top:286.04px;font-size:12px;color:#55575c;transform:scale(.434,.5625);font-size:14px;">dd</div>
<div class="t tb" style="left:610.90px;top:286.04px;font-size:12px;color:#55575c;">海运出口</div>
<div class="r" style="left:139.20px;top:303.18px;width:8.70px;height:8.70px;border:0.8px solid #b6bcc6;border-radius:1px;background:#fff"></div>
<div class="t tl" style="left:161.50px;top:302.36px;font-size:12px;color:#55575c;transform:scale(.434,.5625);font-size:14px;">0</div>
<div class="t tl" style="left:217.70px;top:302.36px;font-size:12px;color:#55575c;transform:scale(.434,.5625);font-size:14px;">LYYZYF</div>
<div class="t tb" style="left:273.50px;top:302.36px;font-size:12px;color:#55575c;">陆运</div>
<div class="t tb" style="left:386.00px;top:302.36px;font-size:12px;color:#55575c;">陆运</div>
<div class="t tl" style="left:499.20px;top:302.36px;font-size:12px;color:#55575c;transform:scale(.434,.5625);font-size:14px;">LUYUN</div>
<div class="t tb" style="left:610.90px;top:302.36px;font-size:12px;color:#55575c;">空运出口</div>
<div class="t tb" style="left:780.20px;top:302.36px;font-size:12px;color:#55575c;">一主一分</div>
<div class="r" style="left:139.20px;top:319.50px;width:8.70px;height:8.70px;border:0.8px solid #b6bcc6;border-radius:1px;background:#fff"></div>
<div class="t tl" style="left:161.50px;top:318.68px;font-size:12px;color:#55575c;transform:scale(.434,.5625);font-size:14px;">0</div>
<div class="t tl" style="left:217.70px;top:318.68px;font-size:12px;color:#55575c;transform:scale(.434,.5625);font-size:14px;">CS</div>
<div class="t tb" style="left:273.50px;top:318.68px;font-size:12px;color:#55575c;">上门</div>
<div class="t tb" style="left:386.00px;top:318.68px;font-size:12px;color:#55575c;">测试</div>
<div class="t tl" style="left:499.20px;top:318.68px;font-size:12px;color:#55575c;transform:scale(.434,.5625);font-size:14px;">ceshi</div>
<div class="t tb" style="left:610.90px;top:318.68px;font-size:12px;color:#55575c;">海运出口</div>
<div class="t bb" style="left:780.20px;top:318.68px;font-size:12px;color:#303133;">整箱</div>
<div class="r" style="left:139.20px;top:335.82px;width:8.70px;height:8.70px;border:0.8px solid #b6bcc6;border-radius:1px;background:#fff"></div>
<div class="t tl" style="left:161.50px;top:335.00px;font-size:12px;color:#55575c;transform:scale(.434,.5625);font-size:14px;">0</div>
<div class="t tl" style="left:217.70px;top:335.00px;font-size:12px;color:#55575c;transform:scale(.434,.5625);font-size:14px;">hudh</div>
<div class="t tb" style="left:273.50px;top:335.00px;font-size:12px;color:#55575c;">老谈海运</div>
<div class="t tb" style="left:386.00px;top:335.00px;font-size:12px;color:#55575c;">老谈海运</div>
<div class="t tl" style="left:499.20px;top:335.00px;font-size:12px;color:#55575c;transform:scale(.434,.5625);font-size:14px;">fafdaf</div>
<div class="t tb" style="left:610.90px;top:335.00px;font-size:12px;color:#55575c;">海运出口</div>
<div class="t bb" style="left:780.20px;top:335.00px;font-size:12px;color:#303133;">整箱</div>
<div class="r" style="left:139.20px;top:352.14px;width:8.70px;height:8.70px;border:0.8px solid #b6bcc6;border-radius:1px;background:#fff"></div>
<div class="t tl" style="left:161.50px;top:351.32px;font-size:12px;color:#55575c;transform:scale(.434,.5625);font-size:14px;">0</div>
<div class="t tl" style="left:217.70px;top:351.32px;font-size:12px;color:#55575c;transform:scale(.434,.5625);font-size:14px;">LYZPX</div>
<div class="t tb" style="left:273.50px;top:351.32px;font-size:12px;color:#55575c;">陆运</div>
<div class="t tb" style="left:386.00px;top:351.32px;font-size:12px;color:#55575c;">陆运</div>
<div class="t tl" style="left:499.20px;top:351.32px;font-size:12px;color:#55575c;transform:scale(.434,.5625);font-size:14px;">LUYUN</div>
<div class="t tb" style="left:610.90px;top:351.32px;font-size:12px;color:#55575c;">海运出口</div>
<div class="t bb" style="left:780.20px;top:351.32px;font-size:12px;color:#303133;">拼箱</div>
<div class="r" style="left:139.20px;top:368.46px;width:8.70px;height:8.70px;border:0.8px solid #b6bcc6;border-radius:1px;background:#fff"></div>
<div class="t tl" style="left:161.50px;top:367.64px;font-size:12px;color:#55575c;transform:scale(.434,.5625);font-size:14px;">0</div>
<div class="t tl" style="left:217.70px;top:367.64px;font-size:12px;color:#55575c;transform:scale(.434,.5625);font-size:14px;">LYTZX</div>
<div class="t tb" style="left:273.50px;top:367.64px;font-size:12px;color:#55575c;">陆运</div>
<div class="t tb" style="left:386.00px;top:367.64px;font-size:12px;color:#55575c;">陆运</div>
<div class="t tl" style="left:499.20px;top:367.64px;font-size:12px;color:#55575c;transform:scale(.434,.5625);font-size:14px;">LUYUN</div>
<div class="t tb" style="left:610.90px;top:367.64px;font-size:12px;color:#55575c;">海运出口</div>
<div class="t bb" style="left:780.20px;top:367.64px;font-size:12px;color:#303133;">特种箱</div>
<div class="r" style="left:139.20px;top:384.78px;width:8.70px;height:8.70px;border:0.8px solid #b6bcc6;border-radius:1px;background:#fff"></div>
<div class="t tl" style="left:161.50px;top:383.96px;font-size:12px;color:#55575c;transform:scale(.434,.5625);font-size:14px;">0</div>
<div class="t tl" style="left:217.70px;top:383.96px;font-size:12px;color:#55575c;transform:scale(.434,.5625);font-size:14px;">LYYZDF</div>
<div class="t tb" style="left:273.50px;top:383.96px;font-size:12px;color:#55575c;">陆运</div>
<div class="t tb" style="left:386.00px;top:383.96px;font-size:12px;color:#55575c;">陆运</div>
<div class="t tl" style="left:499.20px;top:383.96px;font-size:12px;color:#55575c;transform:scale(.434,.5625);font-size:14px;">LUYUN</div>
<div class="t tb" style="left:610.90px;top:383.96px;font-size:12px;color:#55575c;">空运进口</div>
<div class="t tb" style="left:780.20px;top:383.96px;font-size:12px;color:#55575c;">一主多分</div>
<div class="r" style="left:139.20px;top:401.10px;width:8.70px;height:8.70px;border:0.8px solid #b6bcc6;border-radius:1px;background:#fff"></div>
<div class="t tl" style="left:161.50px;top:400.28px;font-size:12px;color:#55575c;transform:scale(.434,.5625);font-size:14px;">1</div>
<div class="t tl" style="left:217.70px;top:400.28px;font-size:12px;color:#55575c;transform:scale(.434,.5625);font-size:14px;">zj_cs_01</div>
<div class="t tl" style="left:274.20px;top:400.28px;font-size:12px;color:#55575c;transform:scale(.434,.5625);font-size:14px;">DIKE</div>
<div class="t tl" style="left:386.70px;top:400.28px;font-size:12px;color:#55575c;transform:scale(.434,.5625);font-size:14px;">DIKE</div>
<div class="t tl" style="left:499.20px;top:400.28px;font-size:12px;color:#55575c;transform:scale(.434,.5625);font-size:14px;">DIKE</div>
<div class="t tb" style="left:610.90px;top:400.28px;font-size:12px;color:#55575c;">海运出口</div>
<div class="t bb" style="left:780.20px;top:400.28px;font-size:12px;color:#303133;">整箱</div>
<div class="r" style="left:139.20px;top:417.42px;width:8.70px;height:8.70px;border:0.8px solid #b6bcc6;border-radius:1px;background:#fff"></div>
<div class="t tl" style="left:161.50px;top:416.60px;font-size:12px;color:#55575c;transform:scale(.434,.5625);font-size:14px;">0</div>
<div class="t tl" style="left:217.70px;top:416.60px;font-size:12px;color:#55575c;transform:scale(.434,.5625);font-size:14px;">1</div>
<div class="t tb" style="left:273.50px;top:416.60px;font-size:12px;color:#55575c;">一般贸易递单</div>
<div class="t tb" style="left:386.00px;top:416.60px;font-size:12px;color:#55575c;">一般贸易递单</div>
<div class="t tb" style="left:498.50px;top:416.60px;font-size:12px;color:#55575c;">一般贸易递单</div>
<div class="t tb" style="left:610.90px;top:416.60px;font-size:12px;color:#55575c;">海运进口</div>
<div class="t bb" style="left:780.20px;top:416.60px;font-size:12px;color:#303133;">整箱</div>
<div class="r" style="left:139.20px;top:433.74px;width:8.70px;height:8.70px;border:0.8px solid #b6bcc6;border-radius:1px;background:#fff"></div>
<div class="t tl" style="left:161.50px;top:432.92px;font-size:12px;color:#55575c;transform:scale(.434,.5625);font-size:14px;">0</div>
<div class="t tl" style="left:217.70px;top:432.92px;font-size:12px;color:#55575c;transform:scale(.434,.5625);font-size:14px;">LYYZYF</div>
<div class="t tb" style="left:273.50px;top:432.92px;font-size:12px;color:#55575c;">陆运</div>
<div class="t tb" style="left:386.00px;top:432.92px;font-size:12px;color:#55575c;">陆运</div>
<div class="t tl" style="left:499.20px;top:432.92px;font-size:12px;color:#55575c;transform:scale(.434,.5625);font-size:14px;">LUYUN</div>
<div class="t tb" style="left:610.90px;top:432.92px;font-size:12px;color:#55575c;">空运进口</div>
<div class="t tb" style="left:780.20px;top:432.92px;font-size:12px;color:#55575c;">一主一分</div>
<div class="r" style="left:139.20px;top:450.06px;width:8.70px;height:8.70px;border:0.8px solid #b6bcc6;border-radius:1px;background:#fff"></div>
<div class="t tl" style="left:161.50px;top:449.24px;font-size:12px;color:#55575c;transform:scale(.434,.5625);font-size:14px;">0</div>
<div class="t tl" style="left:217.70px;top:449.24px;font-size:12px;color:#55575c;transform:scale(.434,.5625);font-size:14px;">11</div>
<div class="t tl" style="left:274.20px;top:449.24px;font-size:12px;color:#55575c;transform:scale(.434,.5625);font-size:14px;">AAAA</div>
<div class="t tb" style="left:386.00px;top:449.24px;font-size:12px;color:#55575c;">收到的</div>
<div class="t tb" style="left:498.50px;top:449.24px;font-size:12px;color:#55575c;">阿萨德</div>
<div class="t tb" style="left:610.90px;top:449.24px;font-size:12px;color:#55575c;">海运出口</div>
<div class="t bb" style="left:780.20px;top:449.24px;font-size:12px;color:#303133;">整箱</div>
<div class="r" style="left:139.20px;top:466.10px;width:8.70px;height:8.70px;border:0.8px solid #b6bcc6;border-radius:1px;background:#fff"></div>
<div class="t tl" style="left:161.50px;top:465.56px;font-size:12px;color:#55575c;transform:scale(.434,.5625);font-size:14px;">0</div>
<div class="t tl" style="left:217.70px;top:465.56px;font-size:12px;color:#55575c;transform:scale(.434,.5625);font-size:14px;">LYZD</div>
<div class="t tb" style="left:273.50px;top:465.56px;font-size:12px;color:#55575c;">陆运</div>
<div class="t tb" style="left:386.00px;top:465.56px;font-size:12px;color:#55575c;">陆运</div>
<div class="t tl" style="left:499.20px;top:465.56px;font-size:12px;color:#55575c;transform:scale(.434,.5625);font-size:14px;">LUYUN</div>
<div class="t tb" style="left:610.90px;top:465.56px;font-size:12px;color:#55575c;">空运出口</div>
<div class="t bb" style="left:780.20px;top:465.56px;font-size:12px;color:#303133;">直单</div>
<!-- tree scrollbar -->
<div style="position:absolute;left:122.8px;top:105.3px;width:3px;height:381px;background:#4a4d52;border-radius:1.5px"></div>
<div style="position:absolute;left:122.8px;top:486px;width:3px;height:29px;background:#dfe1e8"></div>
<!-- table v scrollbar -->
<div style="position:absolute;left:1041px;top:119.4px;width:9px;height:357.6px;background:#f1f1f1"></div>
<div style="position:absolute;left:1042px;top:129.5px;width:6.8px;height:189px;background:#c1c1c1"></div>
<svg style="position:absolute;left:1042px;top:122px" width="7" height="5"><path d="M1.5 4 L3.5 2 L5.5 4 Z" fill="#a3a3a3"/></svg>
<svg style="position:absolute;left:1042px;top:470px" width="7" height="5"><path d="M1.5 1 L3.5 3.5 L5.5 1 Z" fill="#505050"/></svg>
<div style="position:absolute;left:1040.7px;top:477px;width:9.3px;height:9px;background:#fff"></div>
<!-- h scrollbar -->
<div style="position:absolute;left:135.5px;top:477.3px;width:905.2px;height:9.2px;background:#f1f1f1;border-bottom:0.8px solid #e4e7ed"></div>
<div style="position:absolute;left:167.9px;top:478px;width:857.1px;height:6.7px;background:#c1c1c1"></div>
<svg style="position:absolute;left:135px;top:477px" width="32" height="9" viewBox="0 0 32 9"><path d="M3.8 4.6L6.2 2.9V6.3Z M16.8 2.9L19.2 4.6 16.8 6.3Z M26.4 4.6L29 2.9V6.3Z" fill="#9e9e9e"/></svg>
<div style="position:absolute;left:157px;top:100.8px;width:0.8px;height:385.5px;background:#e2e6ed"></div>
<div style="position:absolute;left:135.1px;top:100.8px;width:0.8px;height:385.5px;background:#e4e7ed"></div>
<svg style="position:absolute;left:1034px;top:477.3px" width="6" height="9" viewBox="0 0 6 9"><path d="M1.8 2.9L4.2 4.6 1.8 6.3Z" fill="#505050"/></svg>
<div style="position:absolute;left:1040.5px;top:485.6px;width:10px;height:0.8px;background:#e4e7ed"></div>
<!-- column settings panel -->
<div style="position:absolute;left:1050px;top:100.5px;width:11.8px;height:386px;background:#eef1f6;border:0.7px solid #e3e6ec"></div>
<div style="position:absolute;left:1050px;top:110px;width:11.8px;height:41px;background:#f4f6fa;border-top:0.7px solid #e1e5ee;border-bottom:0.7px solid #e1e5ee"></div>
<svg style="position:absolute;left:1052.5px;top:116px" width="7" height="6"><path d="M1 0.5V5.5 M3.3 0.5V5.5 M5.6 0.5V5.5" stroke="#8a94a8" stroke-width="0.9"/></svg>
<!-- pagination -->
<div style="position:absolute;left:176.3px;top:495.3px;width:33.4px;height:15.5px;border:1px solid #dcdfe6;border-radius:2px"></div>
<div style="position:absolute;left:231.3px;top:495.3px;width:16.7px;height:15.5px;background:#f4f4f5;border-radius:2px"></div>
<svg style="position:absolute;left:236px;top:499px" width="8" height="8"><path d="M5 1.5 L2.8 4 L5 6.5" stroke="#c0c4cc" stroke-width="0.8" fill="none"/></svg>
<div style="position:absolute;left:253.7px;top:495.3px;width:16.8px;height:15.5px;background:#1f72d5;border-radius:2px"></div>
<div style="position:absolute;left:276.3px;top:495.3px;width:16.5px;height:15.5px;background:#f4f4f5;border-radius:2px"></div>
<svg style="position:absolute;left:281px;top:499px" width="8" height="8"><path d="M3 1.5 L5.2 4 L3 6.5" stroke="#c0c4cc" stroke-width="0.8" fill="none"/></svg>
<div style="position:absolute;left:326.3px;top:495.3px;width:25.4px;height:15.5px;border:1px solid #dcdfe6;border-radius:2px"></div>
<svg style="position:absolute;left:0;top:0" width="20" height="34" viewBox="0 0 20 34">
<circle cx="10" cy="17.4" r="8.3" fill="none" stroke="#e9f1fb" stroke-width="0.85"/>
<path d="M10 11 L11.9 15.5 L16.9 17.4 L11.9 19.3 L10 23.8 L8.1 19.3 L3.1 17.4 L8.1 15.5 Z" fill="#fff"/>
<circle cx="10" cy="17.4" r="1.25" fill="none" stroke="#1f74d8" stroke-width="0.6"/>
<path d="M6.3 14.2 L7.2 14.9 M13.7 14.2 L12.8 14.9 M6.3 20.6 L7.2 19.9 M13.7 20.6 L12.8 19.9" stroke="#fff" stroke-width="0.6"/>
</svg>
<svg style="position:absolute;left:29px;top:6px" width="12" height="10" viewBox="0 0 12 10">
<path d="M1.2 1.4H10.2 M4.7 3.45H10.2 M4.7 5.6H10.2 M1.2 8.4H10.2" stroke="#3f4349" stroke-width="0.9"/>
<path d="M1.1 3.3 L3.4 4.6 L1.1 5.9Z" fill="#111"/>
<rect x="1.2" y="6.2" width="9" height="1.7" fill="#d0d0d0"/>
</svg>
<svg style="position:absolute;left:25px;top:31px" width="8" height="8" viewBox="0 0 8 8">
<circle cx="4.2" cy="4.2" r="2.7" fill="none" stroke="#ff4d55" stroke-width="1.15"/>
<path d="M4.2 2.8V5.6" stroke="#ff6b72" stroke-width="0.6"/>
</svg>
<svg style="position:absolute;left:992px;top:4px" width="80" height="14" viewBox="0 0 80 14" fill="none" stroke="#3d424b" stroke-width="0.95" stroke-linecap="round" stroke-linejoin="round">
<path d="M3.6 9.4V6.6C3.6 4.1 5.2 2.3 7.3 2.3S11 4.1 11 6.6V9.4 M2.6 9.6H12 M6.1 11.7H8.5"/>
<path d="M23.6 6.8L29 2.2 34.4 6.8 M25.2 5.6V11.7H27.7V8.9C27.7 7.9 30.3 7.9 30.3 8.9V11.7H32.8V5.6"/>
<path d="M46.3 8.2V7.2C46.3 4.3 48 2.4 50.5 2.4S54.7 4.3 54.7 7.2V8.2 M46.3 6.9C45.1 7.2 45 9.6 46.5 9.9 M54.7 6.9C55.9 7.2 56 9.6 54.5 9.9 M54.5 9.9C54 11 52.6 11.7 51.2 11.7"/>
<rect x="67.5" y="2.7" width="3.2" height="3.2" rx="0.5"/><rect x="72.9" y="2.7" width="3.2" height="3.2" rx="0.5"/>
<rect x="67.5" y="8.1" width="3.2" height="3.2" rx="0.5"/><rect x="72.9" y="8.1" width="3.2" height="3.2" rx="0.5"/>
</svg>
<svg style="position:absolute;left:890px;top:8px" width="8" height="6" viewBox="0 0 8 6"><path d="M1.2 1.8L4 4.4 6.8 1.8" fill="none" stroke="#c0c4cc" stroke-width="0.6"/></svg>
<svg style="position:absolute;left:981px;top:8px" width="8" height="6" viewBox="0 0 8 6"><path d="M1.2 1.8L4 4.4 6.8 1.8" fill="none" stroke="#c0c4cc" stroke-width="0.6"/></svg>
<div style="position:absolute;left:20px;top:249px;width:4.8px;height:29.4px;background:#222a3a;border-radius:0 1px 1px 0"></div>
<svg style="position:absolute;left:21px;top:261px" width="4" height="6" viewBox="0 0 4 6"><path d="M0.8 1L2.8 3 0.8 5" fill="none" stroke="#b6bccb" stroke-width="0.7"/></svg>
<div class="t " style="left:143.30px;top:498.08px;font-size:12px;color:#606266;word-spacing:1.5px">共 39 条</div>
<div class="t " style="left:197.00px;top:498.08px;font-size:12px;color:#606266;">50</div>
<div class="t " style="left:211.70px;top:498.08px;font-size:12px;color:#303133;">条/页</div>
<div class="t b" style="left:259.80px;top:498.08px;font-size:12px;color:#fff;">1</div>
<div class="t " style="left:309.20px;top:498.08px;font-size:12px;color:#606266;">前往</div>
<div class="t " style="left:336.50px;top:498.08px;font-size:12px;color:#606266;">1</div>
<div class="t " style="left:354.00px;top:498.08px;font-size:12px;color:#606266;">页</div>
<div class="t" style="left:1059.5px;top:125.5px;font-size:12px;line-height:14px;color:#303133;transform:rotate(90deg) scale(.5625)">设置列</div></body></html>
